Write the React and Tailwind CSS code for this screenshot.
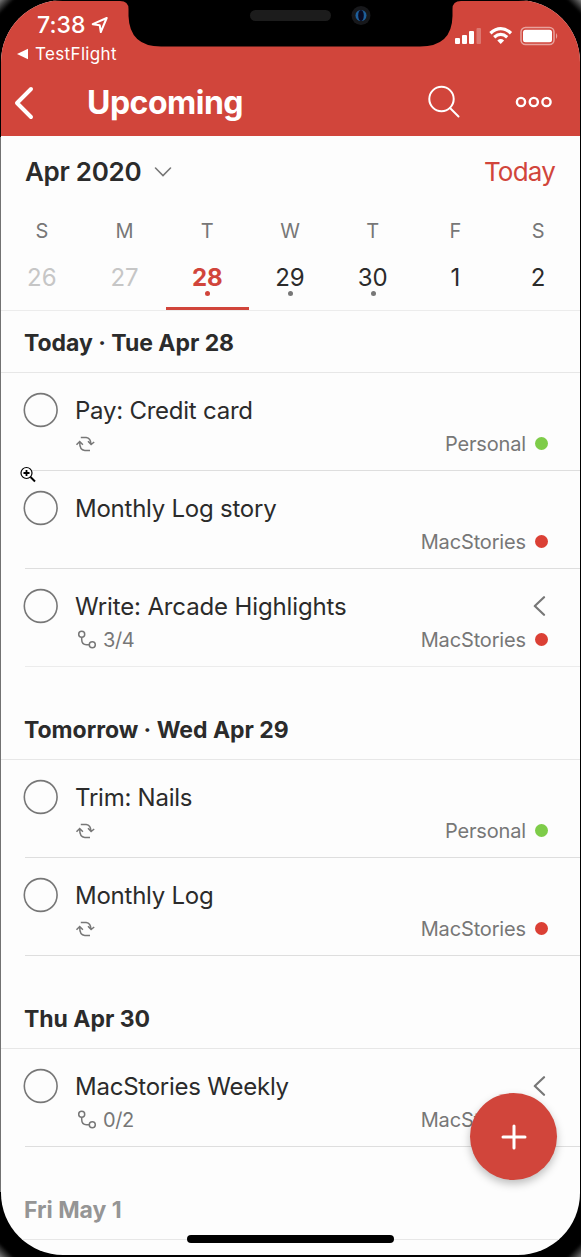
import React from "react";

const weekDays = [
  { name: "S", num: "26", tone: "text-[#c6c6c6]" },
  { name: "M", num: "27", tone: "text-[#c6c6c6]" },
  { name: "T", num: "28", tone: "text-[#d1453b] font-bold", dot: "bg-[#d1453b]", selected: true },
  { name: "W", num: "29", tone: "text-[#2b2b2b]", dot: "bg-[#777777]" },
  { name: "T", num: "30", tone: "text-[#2b2b2b]", dot: "bg-[#777777]" },
  { name: "F", num: "1", tone: "text-[#2b2b2b]" },
  { name: "S", num: "2", tone: "text-[#2b2b2b]" },
];

const sections = [
  {
    title: "Today · Tue Apr 28",
    height: "h-[62px]",
    tasks: [
      { title: "Pay: Credit card", repeat: true, project: "Personal" },
      { title: "Monthly Log story", project: "MacStories" },
      { title: "Write: Arcade Highlights", sub: "3/4", project: "MacStories", light: true, tracking: "tracking-[-0.13px]" },
    ],
  },
  {
    title: "Tomorrow · Wed Apr 29",
    height: "h-[93px]",
    tasks: [
      { title: "Trim: Nails", repeat: true, project: "Personal" },
      { title: "Monthly Log", repeat: true, project: "MacStories" },
    ],
  },
  {
    title: "Thu Apr 30",
    height: "h-[93px]",
    tasks: [{ title: "MacStories Weekly", sub: "0/2", project: "MacStories" }],
  },
  { title: "Fri May 1", height: "h-[93px]", muted: true, tasks: [] },
];

function RepeatIcon() {
  return (
    <svg width="20" height="16" viewBox="0 0 20 16" fill="none" stroke="#777" strokeWidth="1.500" className="shrink-0">
      <path d="M5.800 1.500H11.200Q15.800 2 16 8.400M13 5.300L16.100 8.500L19.200 6" />
      <path d="M15 14.500H9.800Q4.500 14.300 4.700 5.800M1.500 8.800L4.700 5.500L7.900 8.800" />
    </svg>
  );
}

function SubtaskIcon() {
  return (
    <svg width="21" height="20" viewBox="0 0 21 20" fill="none" stroke="#777" strokeWidth="1.500" className="shrink-0">
      <circle cx="6.700" cy="4.200" r="3" />
      <circle cx="17.300" cy="14.700" r="3" />
      <path d="M6.700 7.200V9.500Q6.700 14.700 11.500 14.700H14.300" />
    </svg>
  );
}

function Task({ task }) {
  return (
    <div className={`ml-6 flex h-[98px] border-b ${task.light ? "border-[#ececec]" : "border-[#dedede]"}`}>
      <svg className="-ml-[2px] mt-[19px] shrink-0" width="36" height="36" viewBox="0 0 36 36" fill="none" stroke="#777" strokeWidth="1.600">
        <circle cx="17.700" cy="18" r="16.400" />
      </svg>
      <div className="ml-[16px] flex flex-1 flex-col pt-[21px]">
        <div className="flex h-[34px] items-center justify-between pr-[34px]">
          <span className={`text-2xl leading-[34px] whitespace-nowrap text-[#2b2b2b] ${task.tracking || "tracking-[-0.24px]"}`}>{task.title}</span>
          {task.sub && (
            <svg className="-mt-[2px]" width="14" height="20" viewBox="0 0 14 20" fill="none" stroke="#777" strokeWidth="2.200" strokeLinecap="round" strokeLinejoin="round">
              <path d="M12 1.200L2.800 10L12 18.800" />
            </svg>
          )}
        </div>
        <div className="mt-[3px] flex h-[26px] items-center pr-[32px] text-[20px] leading-[26px] text-[#777777]">
          {task.repeat && <RepeatIcon />}
          {task.sub && (
            <>
              <SubtaskIcon />
              <span className="ml-[7px] tracking-[-0.4px]">{task.sub}</span>
            </>
          )}
          <span className="ml-auto tracking-[-0.15px]">{task.project}</span>
          <span className={`-mt-px ml-[9px] size-[13px] rounded-full ${task.project === "Personal" ? "bg-[#7ecc49]" : "bg-[#db4035]"}`} />
        </div>
      </div>
    </div>
  );
}

function Header() {
  return (
    <header className="relative flex h-[136px] shrink-0 flex-col bg-[#d1453b] text-white">
      <svg className="absolute top-0 left-0" width="579" height="48" viewBox="1 0 579 48">
        <path d="M0 0H580V1H461Q452.500 1 452.500 9V16Q452 46.500 420 46.500H161Q129.500 46.500 128.500 16V9Q128.500 1 120 1H0Z" fill="#000" />
        <rect x="250" y="10" width="81" height="11" rx="5.500" fill="#1c1c1c" />
        <circle cx="361" cy="15.500" r="9.500" fill="#17181b" />
        <circle cx="361" cy="15.500" r="5.500" fill="#1e5f9b" />
        <ellipse cx="361" cy="15.500" rx="2.800" ry="5.500" fill="#080a22" />
      </svg>
      <div className="flex h-[68px] justify-between">
        <div className="pt-[9px]">
          <div className="flex h-[32px] items-center pl-[36px]">
            <span className="text-[23px] font-medium tracking-[0.1px]">7:38</span>
            <svg className="ml-[5px]" width="18" height="18" viewBox="0 0 18 18" fill="none" stroke="#fff" strokeWidth="2" strokeLinejoin="round">
              <path d="M15.700 2L1.700 8.200L8.700 9.200L9.800 16Z" />
            </svg>
          </div>
          <div className="flex h-[25px] items-center pl-[16px]">
            <svg width="12" height="12" viewBox="0 0 12 12" fill="#fff"><path d="M0 6L11 .7V11.300Z" /></svg>
            <span className="ml-[6px] text-[17px] leading-6 tracking-[0.35px]">TestFlight</span>
          </div>
        </div>
        <svg className="mt-[24px] mr-[20px]" width="106" height="24" viewBox="0 0 106 24" fill="#fff">
          <rect x="1" y="14" width="5" height="6" rx="1" />
          <rect x="8" y="11" width="5" height="9" rx="1" />
          <rect x="15" y="7" width="5" height="13" rx="1" />
          <rect x="22.500" y="4" width="4.500" height="16" rx="1" opacity=".27" />
          <g fill="none" stroke="#fff" strokeWidth="3.300">
            <path d="M36.400 9.200Q46.700 0 57 9.200" />
            <path d="M40.200 13.200Q46.700 7.600 53.200 13.200" />
          </g>
          <path d="M43.300 16.500Q46.700 13.700 50.100 16.500L46.700 20Z" />
          <rect x="67" y="3.500" width="33" height="17" rx="4.500" fill="none" stroke="#fff" strokeWidth="1.500" opacity=".5" />
          <rect x="69" y="5.800" width="29" height="12.500" rx="2.500" />
          <path d="M102 9Q104.500 12 102 15Z" opacity=".5" />
        </svg>
      </div>
      <div className="flex h-[68px] items-center pl-[12px]">
        <svg className="mt-[1px]" width="22" height="36" viewBox="0 0 22 36" fill="none" stroke="#fff" strokeWidth="4" strokeLinecap="round" strokeLinejoin="round">
          <path d="M18 4L4 18L18 32" />
        </svg>
        <h1 className="mt-[2px] ml-[52px] text-[32px] leading-[66px] font-bold tracking-[-0.5px]">Upcoming</h1>
        <svg className="ml-auto" width="34" height="34" viewBox="0 0 34 34" fill="none" stroke="#fff" strokeWidth="2" strokeLinecap="round">
          <circle cx="14.500" cy="14" r="12.200" />
          <path d="M23 23L31.500 31.500" />
        </svg>
        <svg className="mr-[27px] ml-[54px]" width="38" height="12" viewBox="0 0 38 12" fill="none" stroke="#fff" strokeWidth="2.400">
          <circle cx="6" cy="6" r="4.100" />
          <circle cx="18.800" cy="6" r="4.100" />
          <circle cx="31.500" cy="6" r="4.100" />
        </svg>
      </div>
    </header>
  );
}

function Calendar() {
  return (
    <div className="flex h-[175px] shrink-0 flex-col border-b border-[#ececec]">
      <div className="flex h-[70px] items-center pt-px pr-[25px] pl-[24px]">
        <span className="text-[26px] font-semibold tracking-[-0.3px] text-[#2b2b2b]">Apr 2020</span>
        <svg className="ml-[13px]" width="18" height="12" viewBox="0 0 18 12" fill="none" stroke="#777" strokeWidth="1.600" strokeLinecap="round">
          <path d="M1.500 2L9 9.500L16.500 2" />
        </svg>
        <span className="ml-auto text-[26px] tracking-[-0.8px] text-[#d1453b]">Today</span>
      </div>
      <div className="grid h-[104px] grid-cols-7">
        {weekDays.map((day, i) => (
          <div key={i} className={`flex flex-col items-center ${day.selected ? "border-b-[3px] border-[#d1453b]" : ""}`}>
            <span className="mt-[10px] -ml-px text-[20px] leading-[30px] text-[#777777]">{day.name}</span>
            <span className={`mt-[16px] -ml-px text-2xl leading-[32px] ${day.tone}`}>{day.num}</span>
            {day.dot && <span className={`-mt-[3px] size-[5px] rounded-full ${day.dot}`} />}
          </div>
        ))}
      </div>
    </div>
  );
}

export default function App() {
  return (
    <div className="relative h-[1257px] w-[581px] overflow-hidden bg-black pr-px pl-px font-[Inter,sans-serif]">
      <div className="absolute top-0 left-0 size-[40px] bg-linear-to-br from-[#777777] from-0% to-black to-22%" />
      <div className="absolute top-0 right-0 size-[40px] bg-linear-to-bl from-[#777777] from-0% to-black to-22%" />
      <div className="absolute bottom-0 left-0 size-[40px] bg-linear-to-tr from-[#777777] from-0% to-black to-22%" />
      <div className="absolute right-0 bottom-0 size-[40px] bg-linear-to-tl from-[#777777] from-0% to-black to-22%" />
      <div className="absolute top-[137px] left-0 h-[1055px] w-px bg-[#727272]" />
      <div className="relative flex h-[1255px] flex-col overflow-hidden rounded-[62px] bg-[#fdfdfd]">
        <Header />
        <Calendar />
        {sections.map((section) => (
          <section key={section.title} className="shrink-0">
            <div className={`flex items-end border-b border-[#e7e7e7] pb-[12px] pl-[23px] ${section.height}`}>
              <h2 className={`text-[23px] leading-[34px] font-bold tracking-[-0.03px] ${section.muted ? "text-[#959595]" : "text-[#2b2b2b]"}`}>
                {section.title}
              </h2>
            </div>
            {section.tasks.map((task) => (
              <Task key={task.title} task={task} />
            ))}
          </section>
        ))}
      </div>
      <button aria-label="Add task" className="absolute top-[1093px] left-[470px] flex size-[87px] items-center justify-center rounded-full bg-[#d1453b] shadow-[0_4px_8px_rgba(0,0,0,0.25)]">
        <svg width="28" height="28" viewBox="0 0 28 28" stroke="#fff" strokeWidth="3" strokeLinecap="round">
          <path d="M14 3V25M3 14H25" />
        </svg>
      </button>
      <div className="absolute top-[1235px] left-[187px] h-[8px] w-[207px] rounded-full bg-black" />
      <svg className="absolute top-[466px] left-[20px]" width="17" height="18" viewBox="0 0 17 18" fill="none">
        <path d="M10.500 11L15 15.500" stroke="#fff" strokeWidth="4" />
        <path d="M10.500 11L15 15.500" stroke="#000" strokeWidth="2" />
        <circle cx="6.500" cy="7" r="5.500" fill="#fff" stroke="#000" strokeWidth="1.200" />
        <path d="M6.500 4V10M3.500 7H9.500" stroke="#000" strokeWidth="1.800" />
      </svg>
    </div>
  );
}
